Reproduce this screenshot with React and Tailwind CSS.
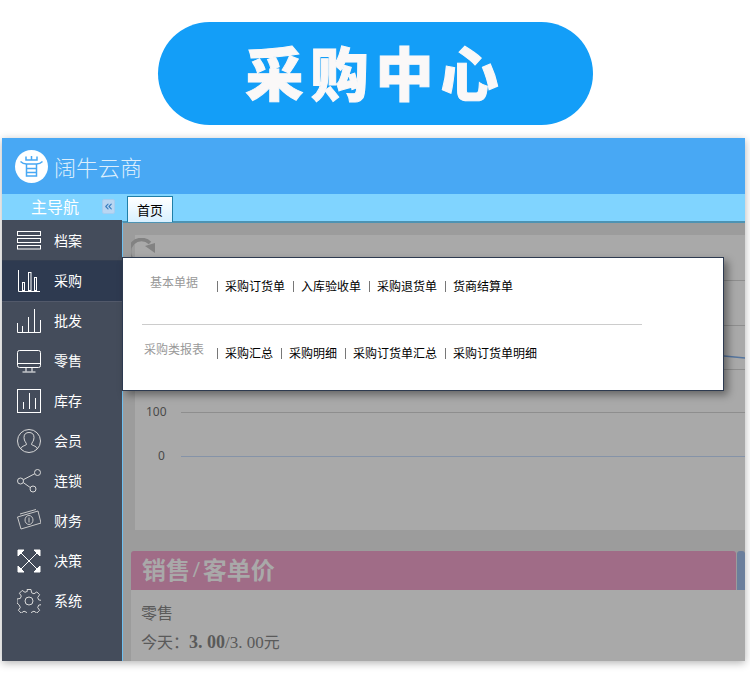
import { ChevronsLeft } from "lucide-react";

const cjk = "font-['Noto_Sans_CJK_SC',sans-serif]";

// Sidebar icons, all drawn in a 24x24 box
const icons = {
  files: (
    <g>
      <rect x="0.5" y="2.5" width="23" height="4" />
      <rect x="0.5" y="9.5" width="23" height="4" />
      <rect x="0.5" y="16.5" width="23" height="3.5" />
    </g>
  ),
  purchase: (
    <g>
      <path d="M1.5 1v21.5H23" />
      <rect x="5.5" y="13.5" width="2" height="8" />
      <rect x="11.5" y="3.5" width="2.5" height="18" />
      <rect x="17.5" y="8.5" width="2" height="13" />
    </g>
  ),
  wholesale: (
    <path d="M0.5 14v9.500h23V11M5.500 23v-6M11.500 23V8M17.500 23V0" />
  ),
  retail: (
    <g>
      <rect x="0.5" y="1.5" width="23" height="17" rx="2" />
      <path d="M0.5 14.5h23M9 18.5v4M15 18.5v4M5.5 23h13" />
    </g>
  ),
  stock: (
    <g>
      <rect x="0.5" y="0.5" width="23" height="23" />
      <path d="M6.5 20V13M12.5 20V4M18.5 20V9" />
    </g>
  ),
  member: (
    <g stroke="#d8d8d8">
      <circle cx="12" cy="12" r="11.5" />
      <path d="M3.5 20c1-3 4-3 6-4.500 0-2-2.500-3-2.500-7C7 5 9 3.500 12 3.500S17 5 17 8.500c0 4-2.500 5-2.500 7 2 1.500 5 1.500 6 4.500" />
    </g>
  ),
  chain: (
    <g stroke="#d8d8d8">
      <circle cx="20.500" cy="3.500" r="3" />
      <circle cx="3.500" cy="12" r="3" />
      <circle cx="16" cy="20" r="3" />
      <path d="M6.300 10.700l11.500-6M6.200 13.500l7 5" />
    </g>
  ),
  money: (
    <g stroke="#c8c8c8">
      <path d="M0.500 8L21 2l3 12L4 20z" />
      <path d="M3 5L19 0.500" />
      <ellipse cx="12" cy="11" rx="4" ry="4.500" />
      <path d="M12 8.500v5" />
    </g>
  ),
  decide: (
    <g>
      <path d="M3 3l18 18M21 3L3 21" />
      <path d="M1 1h6l-6 6zM23 1h-6l6 6zM1 23h6l-6-6zM23 23h-6l6-6z" fill="white" />
    </g>
  ),
  system: (
    <g stroke="#d8d8d8">
      <circle cx="12" cy="12" r="4" />
      <path d="M10 0.500h4l.6 3.300 2.400 1 2.800-1.900 2.800 2.800-1.900 2.800 1 2.400 3.300.6v4l-3.300.6-1 2.400 1.900 2.800-2.800 2.800-2.800-1.900-2.400 1-.6 3.300h-4l-.6-3.300-2.400-1-2.800 1.900-2.800-2.800 1.900-2.800-1-2.400L0 14v-4l3.300-.6 1-2.400L2.400 4.200l2.800-2.800L8 3.300l2.400-1z" />
    </g>
  ),
};

const menu = [
  { label: "档案", icon: "files" },
  { label: "采购", icon: "purchase", cls: "bg-[#2e3a50] shadow-[0_-1px_0_#343e50]" },
  { label: "批发", icon: "wholesale", cls: "shadow-[inset_0_1px_0_#52596a]" },
  { label: "零售", icon: "retail" },
  { label: "库存", icon: "stock" },
  { label: "会员", icon: "member" },
  { label: "连锁", icon: "chain" },
  { label: "财务", icon: "money" },
  { label: "决策", icon: "decide" },
  { label: "系统", icon: "system" },
];

const basicLinks = ["采购订货单", "入库验收单", "采购退货单", "货商结算单"];
const reportLinks = ["采购汇总", "采购明细", "采购订货单汇总", "采购订货单明细"];

function LinkRow({ links }) {
  return (
    <div className="flex text-[12px] leading-[14px] text-black">
      {links.map((link) => (
        <div key={link} className="flex items-center">
          <span className="mr-[7px] ml-[8px] h-[11px] w-px bg-[#777]" />
          <a>{link}</a>
        </div>
      ))}
    </div>
  );
}

function Sidebar() {
  return (
    <div className="w-[120px] shrink-0 bg-[#444c5b] pt-px text-white">
      {menu.map((item) => (
        <div key={item.label} className={`flex h-[40px] items-center gap-[13px] pl-[15px] text-[14px] ${item.cls || ""}`}>
          <svg width="24" height="24" viewBox="0 0 24 24" fill="none" stroke="white" strokeWidth="1" className="shrink-0">
            {icons[item.icon]}
          </svg>
          <span className="mb-[2px]">{item.label}</span>
        </div>
      ))}
    </div>
  );
}

function Chart() {
  const rows = [45, 90, 134, 177];
  return (
    <svg className="h-full w-full" fill="none">
      {rows.map((y) => (
        <path key={y} d={`M46 ${y + 0.5}H700`} stroke="#8e8e8e" />
      ))}
      <path d="M46 221.500H700" stroke="#8593a8" />
      <path d="M46 120L589 121L620 124" stroke="#56769f" strokeWidth="1.500" />
      <text x="11" y="181" fontSize="12" fill="#4a4a4a" fontFamily="Noto Sans, sans-serif">100</text>
      <text x="23" y="225" fontSize="12" fill="#4a4a4a" fontFamily="Noto Sans, sans-serif">0</text>
    </svg>
  );
}

export default function App() {
  return (
    <div className={`h-[693px] w-[750px] overflow-hidden bg-white pt-[22px] ${cjk}`}>
      <div className="ml-[158px] flex h-[103px] w-[435px] items-center justify-center rounded-full bg-[#139ef8] pb-[6px]">
        <span className="text-[58px] leading-none font-black tracking-[7px] text-[#faf8f8] [-webkit-text-stroke:1px_#faf8f8]">采购中心</span>
      </div>

      <div className="mt-[13px] ml-[2px] flex h-[523px] w-[743px] flex-col shadow-[0_2px_8px_rgba(0,0,0,0.3)]">
        <div className="flex h-[56px] items-center gap-[6px] bg-[#48a8f4] pl-[13px]">
          <svg width="33" height="33" viewBox="0 0 33 33" fill="none" stroke="#48a8f4" strokeWidth="1.500">
            <circle cx="16.500" cy="16.500" r="16.500" fill="white" stroke="none" />
            <path d="M11 6.500v3.500h11V6.500M16.500 6v4" />
            <path d="M5.500 11.500c2 2 4 2.500 6 2.500h10c2 0 4-.5 6-2.500" />
            <path d="M11.500 14v12h10V14M11.500 18.500h10M11.500 22.500h10" />
          </svg>
          <span className="text-[22px] font-light text-[#dceefc]">阔牛云商</span>
        </div>

        <div className="relative flex h-[26px] bg-[#80d4ff]">
          <div className="flex w-[120px] items-center pr-[7px] pb-[2px] pl-[29px] text-white">
            <span className="text-[16px]">主导航</span>
            <button className="ml-auto flex h-[15px] w-[13px] items-center justify-center rounded-[2px] border border-[#a5cdf0] bg-[#b9d6f2] text-[#3a7fc0]">
              <ChevronsLeft size={13} strokeWidth={2.500} />
            </button>
          </div>
          <div className="z-10 mt-[2px] ml-[5px] flex h-[26px] w-[46px] items-center justify-center border border-b-0 border-[#1f7fa8] bg-gradient-to-b from-white to-[#d8f0ff] text-[13px] text-black">
            首页
          </div>
        </div>

        <div className="flex min-h-0 flex-1 bg-[#80d4ff]">
          <Sidebar />
          <div className="relative min-w-0 flex-1 pt-px">
            <div className="h-full overflow-hidden border-t-2 border-l-1 border-t-[#4d93b3] border-l-[#6fc0f0] bg-[#9c9c9c]">
              <div className="relative mt-[12px] ml-[12px] h-[295px] bg-[#a9a9a9]">
                <svg width="26" height="24" viewBox="0 0 26 24" fill="none" stroke="#828282" strokeWidth="3.500" className="absolute top-[3px] -left-[4px]">
                  <path d="M2 22A10.500 10.500 0 0 1 19 5" />
                  <path d="M14 8L24 5V15z" fill="#828282" stroke="none" />
                </svg>
                <Chart />
              </div>
              <div className="mt-[21px] ml-[8px] flex h-[39px]">
                <div className="flex w-[605px] shrink-0 items-center rounded-t-[3px] bg-[#a06c87] pb-[4px] pl-[11px] text-[24px] font-bold text-[#a9a9a9]">
                  销售<span className="mx-[3px] font-['Liberation_Serif',serif]">/</span>客单价
                </div>
                <div className="ml-px flex-1 rounded-t-[3px] bg-[#6b7f9c]" />
              </div>
              <div className="ml-[8px] h-[80px] bg-[#a9a9a9] pt-[12px] pl-[10px] text-[16px] leading-[20px] text-[#5a5a5a]">
                <div>零售</div>
                <div className="mt-[10px] font-['Liberation_Serif','Noto_Sans_CJK_SC',serif]">
                  今天：<b className="text-[18px]">3. 00</b><span className="text-[17px]">/3. 00</span>元
                </div>
              </div>
            </div>

            <div className="absolute top-[37px] left-0 z-20 h-[134px] w-[602px] border border-[#2d3a50] bg-white shadow-[4px_4px_8px_rgba(0,0,0,0.4)]">
              <div className="flex items-center pt-[17px]">
                <div className="w-[86px] pb-[8px] pl-[27px] text-[12px] leading-[14px] text-[#999]">基本单据</div>
                <LinkRow links={basicLinks} />
              </div>
              <div className="mt-[27px] ml-[19px] h-px w-[500px] bg-[#ccc]" />
              <div className="mt-[17px] flex items-center">
                <div className="w-[86px] pb-[8px] pl-[21px] text-[12px] leading-[14px] text-[#999]">采购类报表</div>
                <LinkRow links={reportLinks} />
              </div>
            </div>
          </div>
        </div>
      </div>
    </div>
  );
}
